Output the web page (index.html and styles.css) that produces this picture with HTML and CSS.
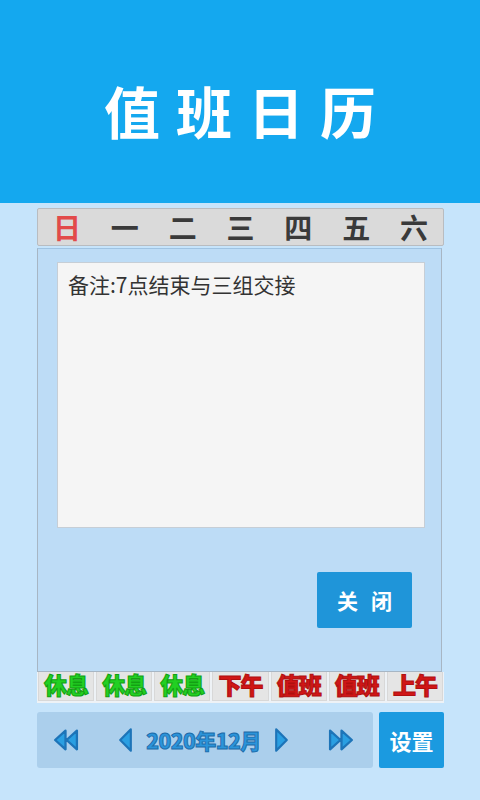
FILE: index.html
```html
<!DOCTYPE html>
<html lang="zh">
<head>
<meta charset="utf-8">
<title>值班日历</title>
<link rel="stylesheet" href="styles.css">
</head>
<body>
<header class="header"><h1 class="title">值班日历</h1></header>
<main class="main">
  <section class="calendar">
    <div class="weekdays">
      <span class="wd sun">日</span><span class="wd">一</span><span class="wd">二</span><span class="wd">三</span><span class="wd">四</span><span class="wd">五</span><span class="wd">六</span>
    </div>
    <div class="dialog">
      <div class="note">备注:7点结束与三组交接</div>
      <div class="dialog-actions"><button class="close-btn">关&nbsp;闭</button></div>
    </div>
    <div class="shifts">
      <span class="shift rest">休息</span><span class="shift rest">休息</span><span class="shift rest">休息</span><span class="shift duty">下午</span><span class="shift duty">值班</span><span class="shift duty">值班</span><span class="shift duty">上午</span>
    </div>
  </section>
  <nav class="navrow">
    <div class="navbar">
      <svg class="ico dbl" viewBox="0 0 26 24"><path d="M13 3 L3 12 L13 21 Z M24 3 L14 12 L24 21 Z" fill="#2a9fe2" stroke="#1d74b8" stroke-width="2.2" stroke-linejoin="round"/></svg>
      <div class="month">
        <svg class="ico sgl" viewBox="0 0 16 24"><path d="M13 2 L3 12 L13 22 Z" fill="#2a9fe2" stroke="#1d74b8" stroke-width="2" stroke-linejoin="round"/></svg>
        <span class="month-text">2020年12月</span>
        <svg class="ico sgl" viewBox="0 0 16 24"><path d="M3 2 L13 12 L3 22 Z" fill="#2a9fe2" stroke="#1d74b8" stroke-width="2" stroke-linejoin="round"/></svg>
      </div>
      <svg class="ico dbl" viewBox="0 0 26 24"><path d="M2 3 L12 12 L2 21 Z M13 3 L23 12 L13 21 Z" fill="#2a9fe2" stroke="#1d74b8" stroke-width="2.2" stroke-linejoin="round"/></svg>
    </div>
    <button class="settings">设置</button>
  </nav>
</main>
</body>
</html>
```
FILE: styles.css
```css
* { box-sizing: border-box; }
html, body { margin: 0; padding: 0; }
body {
  width: 480px;
  height: 800px;
  overflow: hidden;
  background: #c6e4fb;
  font-family: "Noto Sans CJK SC", "Noto Sans", sans-serif;
}
.header {
  height: 203px;
  background: #14a8ef;
  display: flex;
  align-items: center;
  justify-content: center;
}
.title {
  margin: 0 0 0 16px;
  color: #fff;
  font-size: 56px;
  font-weight: 700;
  letter-spacing: 16px;
  line-height: 1;
  padding-top: 16px;
}
.main {
  padding: 5px 36px 0 37px;
}
.calendar {
  width: 407px;
  display: flex;
  flex-direction: column;
}
.weekdays {
  height: 38px;
  background: #dadada;
  border: 1px solid #b9bcc0;
  border-radius: 2px;
  display: grid;
  grid-template-columns: repeat(7, 1fr);
  align-items: center;
}
.wd {
  text-align: center;
  font-size: 28px;
  font-weight: 700;
  color: #3a3a3a;
  line-height: 1;
}
.wd.sun { color: #e24a4a; }
.dialog {
  margin-top: 2px;
  width: 405px;
  height: 424px;
  background: #bddcf6;
  border: 1px solid #a7b6c4;
  border-top-color: #9fc3e2;
  padding: 13px 16px 0 19px;
  display: flex;
  flex-direction: column;
}
.note {
  height: 266px;
  background: #f5f5f5;
  border: 1px solid #c6ced6;
  padding: 6px 10px;
  font-size: 21px;
  color: #333;
  line-height: 30px;
}
.dialog-actions {
  margin-top: 44px;
  display: flex;
  justify-content: flex-end;
  padding-right: 13px;
}
.close-btn {
  width: 95px;
  height: 56px;
  border: 0;
  border-radius: 2px;
  background: #1f95d9;
  color: #fff;
  font-family: "Noto Sans CJK SC", sans-serif;
  font-size: 21px;
  font-weight: 700;
  letter-spacing: 4px;
  padding: 0 0 0 4px;
}
.shifts {
  height: 31px;
  display: grid;
  grid-template-columns: repeat(7, 1fr);
  background: #eef2f6;
  padding-bottom: 2px;
}
.shift {
  background: #e5e5e5;
  border: 1px solid #d8d8d8;
  border-top: 0;
  margin: 0 1px;
  text-align: center;
  font-size: 23px;
  font-weight: 900;
  line-height: 25px;
  letter-spacing: -1px;
}
.shift.rest {
  color: #22d022;
  -webkit-text-stroke: 1px #13a013;
}
.shift.duty {
  color: #d01616;
  -webkit-text-stroke: 1px #b00f0f;
}
.navrow {
  margin-top: 9px;
  width: 407px;
  display: flex;
  gap: 6px;
}
.navbar {
  flex: 1;
  height: 56px;
  background: #abcfec;
  border-radius: 3px;
  display: flex;
  align-items: center;
  padding: 0 18px 0 15px;
  justify-content: space-between;
}
.month {
  display: flex;
  align-items: center;
  gap: 12px;
}
.ico.dbl { width: 27px; height: 26px; }
.ico.sgl { width: 17px; height: 26px; }
.month-text {
  font-size: 21px;
  font-weight: 900;
  color: #2b94da;
  -webkit-text-stroke: 0.9px #1c6aa8;
  letter-spacing: -0.5px;
}
.settings {
  width: 65px;
  height: 56px;
  border: 0;
  border-radius: 2px;
  background: #1b9ae0;
  color: #fff;
  font-family: "Noto Sans CJK SC", sans-serif;
  font-size: 22px;
  font-weight: 700;
  padding: 0;
}
```
